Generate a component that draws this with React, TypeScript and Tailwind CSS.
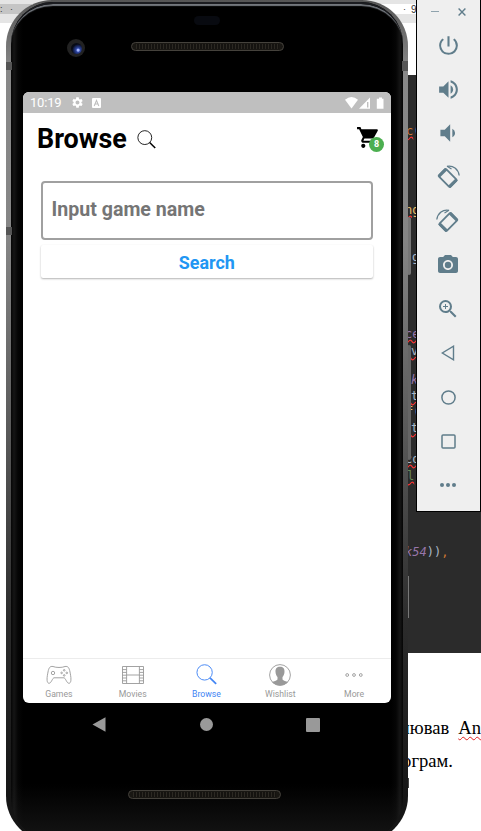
import React from "react";
import {
  MdPowerSettingsNew,
  MdVolumeUp,
  MdVolumeDown,
  MdCameraAlt,
  MdZoomIn,
  MdSettings,
} from "react-icons/md";

function SearchGlyph({ className }: { className: string }) {
  return (
    <svg viewBox="0 0 20 20" className={className} fill="none" stroke="currentColor">
      <circle cx="8.2" cy="8" r="7.3" strokeWidth="0.9" />
      <path d="M13.3 13.2L19.2 19" strokeWidth="1.6" />
    </svg>
  );
}

function CartGlyph() {
  return (
    <svg viewBox="0 0 24 24" className="size-[25px]" fill="currentColor">
      <path d="M7 18c-1.1 0-1.99.9-1.99 2S5.9 22 7 22s2-.9 2-2-.9-2-2-2zM1 2v2h2l3.6 7.59-1.35 2.45c-.16.28-.25.61-.25.96 0 1.1.9 2 2 2h12v-2H7.42c-.14 0-.25-.11-.25-.25l.03-.12.9-1.63h7.45c.75 0 1.41-.41 1.75-1.03l3.58-6.49A1 1 0 0 0 20 4H5.21l-.94-2H1zm16 16c-1.1 0-1.99.9-1.99 2s.89 2 1.99 2 2-.9 2-2-.9-2-2-2z" />
    </svg>
  );
}

function RotateGlyph({ flip }: { flip?: boolean }) {
  return (
    <svg viewBox="-12 -12 24 24" className={flip ? "size-6 -scale-x-100" : "size-6"} fill="none" stroke="currentColor">
      <g transform="translate(-0.3 1) rotate(45)">
        <rect x="-8.2" y="-5.2" width="16.4" height="10.4" rx="1.2" strokeWidth="1.8" />
        <path d="M-7.4 -5.2V5.2M7.4 -5.2V5.2" strokeWidth="3" />
      </g>
      <path d="M-1 -10.7C5 -12 10.3 -8 11.2 -1.5" strokeWidth="1.3" />
      <path d="M-1 -10.7L3.5 -8" strokeWidth="1.2" />
    </svg>
  );
}

function Ruler() {
  return (
    <div className="h-[23px] w-full bg-[#e5e5e5] pt-1">
      <div className="flex h-[10px] justify-between bg-white font-['Liberation_Sans'] text-[9px] leading-[11px] text-[#333]">
        <div className="w-8 bg-[#c5c5c5]">: &nbsp; ·</div>
        <div className="flex w-[79px] gap-[5px] pl-[1px]"><span>·</span><span className="text-[10px]">9</span></div>
      </div>
    </div>
  );
}

function CodeLine({ className, children }: { className: string; children: React.ReactNode }) {
  return <div className={"absolute whitespace-pre " + className}>{children}</div>;
}

function Desktop() {
  return (
    <div className="flex h-full flex-col bg-white">
      <Ruler />
      <div className="h-[52px]" />
      <div className="relative ml-auto h-[578px] w-[81px] bg-[#2b2b2b] font-['DejaVu_Sans_Mono'] text-[12px] leading-4 text-[#a9b7c6]">
        <CodeLine className="left-[6px] top-12"><span className="text-[#cc7832] underline decoration-[#f33] decoration-wavy">c</span>(</CodeLine>
        <CodeLine className="left-[5px] top-[127px] text-[#e8bf6a] underline decoration-[#f33] decoration-wavy">ng</CodeLine>
        <CodeLine className="left-[12px] top-[174px] underline decoration-[#f33] decoration-wavy">g</CodeLine>
        <CodeLine className="left-[5px] top-[251px] text-[#9876aa] underline decoration-[#f33] decoration-wavy">ce</CodeLine>
        <CodeLine className="left-[11px] top-[268px] underline decoration-[#f33] decoration-wavy">v</CodeLine>
        <CodeLine className="left-[11px] top-[297px] italic text-[#9876aa]">k</CodeLine>
        <CodeLine className="left-[11px] top-[313px] underline decoration-[#f33] decoration-wavy">t</CodeLine>
        <CodeLine className="left-[6px] top-[329px]"><span className="text-[#e8bf6a]">f</span>(</CodeLine>
        <CodeLine className="left-[11px] top-[345px] underline decoration-[#f33] decoration-wavy">t</CodeLine>
        <CodeLine className="left-[5px] top-[376px] underline decoration-[#f33] decoration-wavy">co</CodeLine>
        <CodeLine className="left-[7px] top-[393px] text-[#6a8759] underline decoration-[#f33] decoration-wavy">l</CodeLine>
        <CodeLine className="left-[5px] top-[469px]"><span className="italic text-[#9876aa]">k54</span>))<span className="text-[#cc7832]">,</span></CodeLine>
        <div className="absolute left-[8px] top-[501px] h-[42px] w-px bg-[#777]" />
      </div>
      <div className="ml-auto w-[80px] whitespace-pre pt-[58px] font-['Liberation_Serif'] text-[18.6px] leading-[33px] text-black">
        <div className="flex justify-end gap-[9px]"><span>нював</span><span className="underline decoration-[#e02020] decoration-wavy decoration-1 underline-offset-2">An</span></div>
        <div className="flex justify-end pr-[28px]">ограм.</div>
      </div>
    </div>
  );
}

function Speaker() {
  return (
    <div className="flex h-[9px] w-[153px] items-center rounded-full border border-[#45423c] bg-[#191713] px-1">
      <div className="h-[5px] w-full bg-[repeating-linear-gradient(90deg,#2c2923_0_1px,#151310_1px_3px)]" />
    </div>
  );
}

function StatusBar() {
  return (
    <div className="flex h-[21px] items-center bg-[#bfbfbf] pl-[7px] pr-[6px] text-white">
      <span className="w-[41px] text-[13px] leading-[21px] tracking-[-0.2px]">10:19</span>
      <MdSettings className="size-[13px]" />
      <svg viewBox="0 0 9 10" className="ml-[8px] h-[10px] w-[9px]">
        <rect width="9" height="10" rx="1" fill="white" />
        <path d="M2.2 8L4.5 2.4L6.8 8M3.2 6H5.9" fill="none" stroke="#bfbfbf" strokeWidth="1.1" />
      </svg>
      <svg viewBox="0 0 40 12" className="ml-auto h-3 w-10">
        <path d="M0 2.7Q6.5 -2.5 13 2.7L6.5 11.5Z" fill="white" />
        <path d="M25 0.5V11.8H14Z" fill="white" />
        <path d="M22.7 5V10.5" stroke="#bfbfbf" strokeWidth="1.4" />
        <path d="M34 0.5h3v1.2h1.5v10.1h-6.7V1.7H34Z" fill="white" />
      </svg>
    </div>
  );
}

function GamesGlyph() {
  return (
    <svg viewBox="0 0 26 20" className="h-5 w-[26px]" fill="none" stroke="currentColor" strokeWidth="0.9">
      <path d="M7 1.5C4 .9 2.8 2.8 2 7C1 12 .3 17 2.5 18.2C5 19 6 14 7.8 12.8H18.2C20 14 21 19 23.5 18.2C25.7 17 25 12 24 7C23.2 2.8 22 .9 19 1.5C16 2.8 10 2.8 7 1.5Z" />
      <circle cx="7" cy="8" r="1.7" />
      <circle cx="18.2" cy="5.3" r=".8" /><circle cx="18.2" cy="10.4" r=".8" />
      <circle cx="15.6" cy="7.9" r=".8" /><circle cx="20.8" cy="7.9" r=".8" />
    </svg>
  );
}

function MoviesGlyph() {
  return (
    <svg viewBox="0 0 22 18" className="h-[18px] w-[22px]" fill="none" stroke="currentColor" strokeWidth="0.9">
      <path d="M.5 .5H21.5V17.5H.5ZM4.6 .5V17.5M17.4 .5V17.5M4.6 9H17.4" />
      <path d="M.5 3.6H4.6M.5 6.4H4.6M.5 9.2H4.6M.5 12H4.6M.5 14.8H4.6M17.4 3.6H21.5M17.4 6.4H21.5M17.4 9.2H21.5M17.4 12H21.5M17.4 14.8H21.5" />
    </svg>
  );
}

function PersonGlyph() {
  return (
    <svg viewBox="0 0 22 22" className="size-[22px]">
      <circle cx="11" cy="11" r="10.4" fill="none" stroke="currentColor" strokeWidth="0.9" />
      <path d="M11 2.8C14 2.8 15.8 4.7 15.5 8C15.3 10.6 14.4 12 13.5 13V15.5C14.2 16.9 17.2 17 19 18Q16 21.4 11 21.4T3 18C4.8 17 7.8 16.9 8.5 15.5V13C7.6 12 6.7 10.6 6.5 8C6.2 4.7 8 2.8 11 2.8Z" fill="currentColor" />
    </svg>
  );
}

function MoreGlyph() {
  return (
    <svg viewBox="0 0 18 6" className="h-1.5 w-[18px]" fill="none" stroke="currentColor" strokeWidth="0.9">
      <circle cx="2.2" cy="3" r="1.4" /><circle cx="9" cy="3" r="1.4" /><circle cx="15.8" cy="3" r="1.4" />
    </svg>
  );
}

function Tab({ label, active, children }: { label: string; active?: boolean; children: React.ReactNode }) {
  return (
    <div className={"flex flex-1 flex-col items-center pt-1 " + (active ? "text-[#4285f4]" : "text-[#999]")}>
      <div className="flex h-[23px] items-center">{children}</div>
      <span className="mt-[3px] text-[8.7px] leading-[11px]">{label}</span>
    </div>
  );
}

function Screen() {
  return (
    <div className="flex h-[611px] w-[368px] flex-col overflow-hidden rounded-[6px] bg-white">
      <StatusBar />
      <header className="flex h-[51px] items-center pl-[14px] pr-[10px] text-black">
        <h1 className="text-[26.9px] font-bold leading-8">Browse</h1>
        <SearchGlyph className="ml-[10px] mt-0.5 size-[19px]" />
        <div className="relative -top-px ml-auto pl-px">
          <CartGlyph />
          <span className="absolute -right-[3px] top-[12px] flex size-[15px] items-center justify-center rounded-full bg-[#4caf50] text-[9px] font-bold text-white">8</span>
        </div>
      </header>
      <main className="flex flex-1 flex-col px-[17.5px] pt-[17px]">
        <div className="flex h-[59px] w-[332.5px] items-center rounded-[4px] border-2 border-[#a0a0a0] pb-px pl-[9px] text-[19.6px] font-bold text-[#757575]">Input game name</div>
        <button className="mt-[5px] h-[33px] w-[332.5px] rounded-[2px] bg-white pt-[3px] text-[17.9px] font-bold text-[#2196f3] shadow-[0_1px_2px_rgba(0,0,0,0.3)]">Search</button>
      </main>
      <nav className="-ml-[1px] flex h-[45px] border-t border-[#ececec]">
        <Tab label="Games"><GamesGlyph /></Tab>
        <Tab label="Movies"><MoviesGlyph /></Tab>
        <Tab label="Browse" active><SearchGlyph className="size-[21px]" /></Tab>
        <Tab label="Wishlist"><PersonGlyph /></Tab>
        <Tab label="More"><MoreGlyph /></Tab>
      </nav>
    </div>
  );
}

function Phone() {
  return (
    <div className="absolute left-[6px] top-0 h-[842px] w-[402px] rounded-[46px] bg-[linear-gradient(180deg,#555_0,#888_70px,#858585_240px,#555_450px,#2c2c2c_620px,#151515_800px)] px-[5px] pb-[2px] pt-[2px] font-['Roboto',sans-serif]">
      <div className="absolute left-0 top-[62px] h-2 w-[6px] bg-[#555]" />
      <div className="absolute left-0 top-[227px] h-2 w-[6px] bg-[#555]" />
      <div className="absolute right-0 top-[61px] h-[10px] w-[6px] bg-[#555]" />
      <div className="h-full rounded-[42px] bg-[linear-gradient(90deg,#050505_0,#151515_3px,#050505_7px,#000_12px,#000_380px,#050505_385px,#151515_389px,#050505)] px-3">
        <div className="-mx-3 h-full rounded-[42px] border-t-2 border-[#1b1c20] bg-[linear-gradient(180deg,transparent_780px,rgba(36,36,36,.6)_838px)] px-3 shadow-[inset_0_3px_1px_-1px_#73777d]">
          <div className="relative h-[88px]">
            <div className="absolute left-[171px] top-3 h-[9px] w-[26px] rounded-full bg-[#080a10]" />
            <div className="absolute left-[44px] top-[35px] flex size-[18px] items-center justify-center rounded-full bg-[#222]">
              <div className="size-[11px] rounded-full bg-[radial-gradient(circle_at_65%_65%,#a5b8ff_0_1px,#3048a5_2px,#101a40_5px,#080b15_6px)]" />
            </div>
            <div className="absolute left-[108px] top-[38px]"><Speaker /></div>
          </div>
          <Screen />
          <div className="flex items-center justify-between pl-[69px] pr-[71px] pt-[14px]">
            <svg viewBox="0 0 14 15" className="h-[15px] w-[14px]"><path d="M13.5 .3V14.7L.5 7.5Z" fill="#999" /></svg>
            <div className="size-[13px] rounded-full bg-[#999]" />
            <div className="size-[14px] rounded-[1px] bg-[#999]" />
          </div>
          <div className="ml-[105px] mt-[58px]"><Speaker /></div>
        </div>
      </div>
    </div>
  );
}

function Cell({ children }: { children: React.ReactNode }) {
  return <div className="flex h-11 items-center justify-center pr-px">{children}</div>;
}

function Toolbar() {
  return (
    <aside className="absolute left-[416px] top-0 h-[512px] w-[65px] border border-t-0 border-black bg-[#efefef] text-[#607d8b]">
      <div className="flex h-[23px] items-center justify-end gap-[19px] pr-[14px]">
        <div className="h-[1.5px] w-2 bg-[#8fa3ad]" />
        <svg viewBox="0 0 8 8" className="size-2" fill="none" stroke="currentColor" strokeWidth="1.4"><path d="M.6 .6L7.4 7.4M7.4 .6L.6 7.4" /></svg>
      </div>
      <Cell><MdPowerSettingsNew className="size-[25px]" /></Cell>
      <Cell><MdVolumeUp className="size-[25px]" /></Cell>
      <Cell><MdVolumeDown className="size-[26px]" /></Cell>
      <Cell><RotateGlyph /></Cell>
      <Cell><RotateGlyph flip /></Cell>
      <Cell><MdCameraAlt className="size-6" /></Cell>
      <Cell><MdZoomIn className="size-6" /></Cell>
      <Cell><svg viewBox="0 0 14 16" className="h-4 w-[14px]" fill="none" stroke="currentColor" strokeWidth="1.4"><path d="M12.5 1.2V14.8L1.3 8Z" /></svg></Cell>
      <Cell><svg viewBox="0 0 15 15" className="size-[15px]" fill="none" stroke="currentColor" strokeWidth="1.5"><circle cx="7.5" cy="7.5" r="6.6" /></svg></Cell>
      <Cell><svg viewBox="0 0 15 15" className="size-[15px]" fill="none" stroke="currentColor" strokeWidth="1.5"><rect x="1" y="1" width="13" height="13" rx="1" /></svg></Cell>
      <Cell>
        <svg viewBox="0 0 16 4" className="h-1 w-4" fill="currentColor"><circle cx="2" cy="2" r="2" /><circle cx="8" cy="2" r="2" /><circle cx="14" cy="2" r="2" /></svg>
      </Cell>
    </aside>
  );
}

export default function App() {
  return (
    <div className="relative h-[831px] w-[481px] overflow-hidden">
      <Desktop />
      <div className="absolute left-[407px] top-[217px] h-[58px] w-1 rounded-sm bg-[#777]" />
      <div className="absolute left-[407px] top-[345px] h-[115px] w-1 rounded-sm bg-[#666]" />
      <div className="absolute left-[407px] top-[778px] h-[10px] w-0.5 bg-[#444]" />
      <Phone />
      <Toolbar />
    </div>
  );
}
